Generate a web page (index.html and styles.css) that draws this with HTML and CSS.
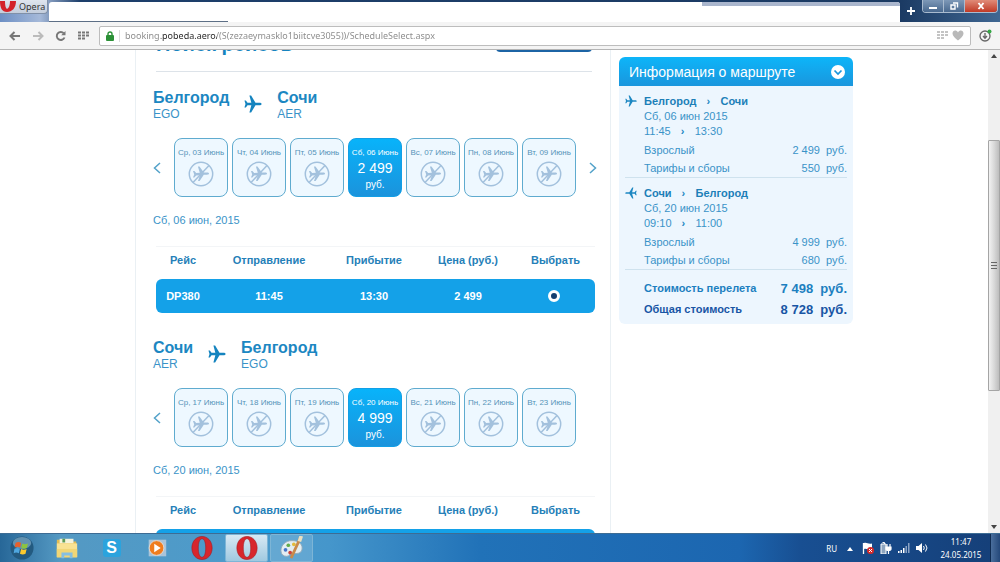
FILE: index.html
```html
<!DOCTYPE html>
<html lang="ru">

<head>
    <meta charset="UTF-8">
    <meta name="viewport" content="width=device-width, initial-scale=1.0">
    <title>Поиск рейсов</title>
    <link rel="stylesheet" href="styles.css">
</head>

<body>
    <!-- Shared icons -->
    <svg class="sprite" aria-hidden="true">
        <symbol id="plane" viewBox="0 0 24 24">
            <path d="M23.5 12c0-1.200-1.500-1.700-3-1.700h-5.200L9.500.8H7.200l2.600 9.500H4.700L2.500 7.400H.6L2 12 .6 16.600h1.900l2.200-2.900h5.100l-2.600 9.500h2.300l5.800-9.500h5.200c1.500 0 3-.5 3-1.700z" />
        </symbol>
        <symbol id="noflight" viewBox="0 0 26 26">
            <circle cx="13" cy="13" r="11.700" fill="none" stroke="currentColor" stroke-width="1.500" />
            <path d="M5 21.500 21 4.500" stroke="currentColor" stroke-width="1.500" />
            <path d="M21 12.600c0-.8-1-1.100-2-1.100h-3.200L11.500 5.500h-1.600l1.900 6.200-3.600.4-1.800-2H5l1.200 3.300L5 16.500h1.400l1.800-2 3.700-.2-1.900 5.800h1.600l4.200-6.300h3.200c1 0 2-.4 2-1.200z" fill="currentColor" />
        </symbol>
        <symbol id="operaLogo" viewBox="0 0 24 26">
            <path fill-rule="evenodd" d="M12 .5C5.500.5 1 6 1 13s4.500 12.500 11 12.500S23 20 23 13 18.500.5 12 .5zM12 3c2.600 0 4 4.300 4 10s-1.400 10-4 10-4-4.300-4-10 1.400-10 4-10z" fill="#d7262c" stroke="#a3161c" stroke-width=".6" />
        </symbol>
        <symbol id="dots" viewBox="0 0 12 9">
            <path d="M0 0h3v2H0zM4 0h3v2H4zM8 0h3v2H8zM0 3h3v2H0zM4 3h3v2H4zM8 3h3v2H8zM0 6h3v2H0zM4 6h3v2H4z" fill="currentColor" />
        </symbol>
    </svg>

    <header class="titlebar">
        <button class="opera-menu"><svg viewBox="0 0 16 12"><path d="M0 0h5c0 4 .5 7 2 8 2-1 3-4 3-8h6c0 7-4 11-9 11S0 7 0 0z" fill="#d3222a" /></svg>Opera</button>
        <div class="tabs">
            <div class="tab"></div>
            <div class="tab-rest"></div>
        </div>
        <button class="new-tab" aria-label="Новая вкладка"><svg viewBox="0 0 8 8"><path d="M4 0v8M0 4h8" stroke="#fff" stroke-width="1.800" /></svg></button>
        <div class="window-buttons">
            <button aria-label="Свернуть"><svg viewBox="0 0 10 8"><path d="M1 5h8v2H1z" fill="#fff" /></svg></button>
            <button aria-label="Развернуть"><svg viewBox="0 0 10 8"><path d="M4 1h4.500v4.500M2 3h4v4H2z" fill="none" stroke="#fff" stroke-width="1.400" /></svg></button>
            <button class="close" aria-label="Закрыть"><svg viewBox="0 0 10 8"><path d="M2.500 1l5 6M7.500 1l-5 6" stroke="#fff" stroke-width="1.900" /></svg></button>
        </div>
    </header>

    <nav class="toolbar">
        <button class="tool" aria-label="Назад"><svg viewBox="0 0 12 10"><path d="M11 5H2M5.500 1 1.500 5l4 4" fill="none" stroke="#777" stroke-width="2" /></svg></button>
        <button class="tool" aria-label="Вперёд"><svg viewBox="0 0 12 10"><path d="M1 5h9M6.500 1l4 4-4 4" fill="none" stroke="#bbb" stroke-width="2" /></svg></button>
        <button class="tool" aria-label="Обновить"><svg viewBox="0 0 12 10"><path d="M9.500 6.500A4 4 0 1 1 8.800 2.300" fill="none" stroke="#777" stroke-width="1.900" /><path d="M10.500 0v4.300H6.200z" fill="#777" /></svg></button>
        <button class="tool dark" aria-label="Экспресс-панель"><svg><use href="#dots" /></svg></button>
        <div class="address">
            <svg class="lock" viewBox="0 0 8 10"><path d="M2 5V3a2 2 0 0 1 4 0v2" fill="none" stroke="#2c9137" stroke-width="1.400" /><rect y="4" width="8" height="6" rx="1" fill="#2c9137" /></svg>
            <input class="url" type="text" aria-label="Адрес" value="booking.pobeda.aero/(S(zezaeymasklo1biitcve3055))/ScheduleSelect.aspx">
            <svg class="address-dots"><use href="#dots" /></svg>
            <svg class="heart" viewBox="0 0 12 11"><path d="M6 10.500C3 8 .5 6 .5 3.500.5 0 4.500-.5 6 2.500 7.500-.5 11.500 0 11.500 3.500 11.500 6 9 8 6 10.500z" fill="#b9b9b9" /></svg>
        </div>
        <button class="download" aria-label="Загрузки"><svg viewBox="0 0 13 13"><circle cx="6" cy="7" r="5" fill="none" stroke="#666" stroke-width="1.300" /><path d="M6 4v5M4 7l2 2.300L8 7" fill="none" stroke="#666" stroke-width="1.300" /><circle cx="10.500" cy="2.500" r="2" fill="#35a845" /></svg></button>
    </nav>

    <div class="viewport">
        <div class="page">
            <main class="schedule">
                <div class="search-head">
                    <h1>Поиск рейсов</h1>
                    <button class="search-button" aria-label="Найти"></button>
                </div>

                <section class="leg">
                    <div class="route">
                        <div><h2>Белгород</h2><p>EGO</p></div>
                        <svg class="route-plane"><use href="#plane" /></svg>
                        <div><h2>Сочи</h2><p>AER</p></div>
                    </div>
                    <div class="days">
                        <button class="arrow" aria-label="Назад"><svg viewBox="0 0 8 12"><path d="M7 1 1.500 6 7 11" /></svg></button>
                        <div class="day-list">
                            <button class="day">Ср, 03 Июнь<svg><use href="#noflight" /></svg></button>
                            <button class="day">Чт, 04 Июнь<svg><use href="#noflight" /></svg></button>
                            <button class="day">Пт, 05 Июнь<svg><use href="#noflight" /></svg></button>
                            <button class="day active">Сб, 06 Июнь<b>2 499</b><span>руб.</span></button>
                            <button class="day">Вс, 07 Июнь<svg><use href="#noflight" /></svg></button>
                            <button class="day">Пн, 08 Июнь<svg><use href="#noflight" /></svg></button>
                            <button class="day">Вт, 09 Июнь<svg><use href="#noflight" /></svg></button>
                        </div>
                        <button class="arrow" aria-label="Вперёд"><svg viewBox="0 0 8 12"><path d="M1 1l5.500 5L1 11" /></svg></button>
                    </div>
                    <p class="date">Сб, 06 июн, 2015</p>
                    <table class="flights">
                        <thead>
                            <tr><th class="c-flight">Рейс</th><th class="c-dep">Отправление</th><th class="c-arr">Прибытие</th><th class="c-price">Цена (руб.)</th><th>Выбрать</th></tr>
                        </thead>
                        <tbody>
                            <tr><td>DP380</td><td>11:45</td><td>13:30</td><td>2 499</td><td><input type="radio" name="out" aria-label="Выбрать DP380" checked></td></tr>
                        </tbody>
                    </table>
                </section>

                <section class="leg">
                    <div class="route">
                        <div><h2>Сочи</h2><p>AER</p></div>
                        <svg class="route-plane"><use href="#plane" /></svg>
                        <div><h2>Белгород</h2><p>EGO</p></div>
                    </div>
                    <div class="days">
                        <button class="arrow" aria-label="Назад"><svg viewBox="0 0 8 12"><path d="M7 1 1.500 6 7 11" /></svg></button>
                        <div class="day-list">
                            <button class="day">Ср, 17 Июнь<svg><use href="#noflight" /></svg></button>
                            <button class="day">Чт, 18 Июнь<svg><use href="#noflight" /></svg></button>
                            <button class="day">Пт, 19 Июнь<svg><use href="#noflight" /></svg></button>
                            <button class="day active">Сб, 20 Июнь<b>4 999</b><span>руб.</span></button>
                            <button class="day">Вс, 21 Июнь<svg><use href="#noflight" /></svg></button>
                            <button class="day">Пн, 22 Июнь<svg><use href="#noflight" /></svg></button>
                            <button class="day">Вт, 23 Июнь<svg><use href="#noflight" /></svg></button>
                        </div>
                    </div>
                    <p class="date">Сб, 20 июн, 2015</p>
                    <table class="flights">
                        <thead>
                            <tr><th class="c-flight">Рейс</th><th class="c-dep">Отправление</th><th class="c-arr">Прибытие</th><th class="c-price">Цена (руб.)</th><th>Выбрать</th></tr>
                        </thead>
                        <tbody>
                            <tr><td></td><td></td><td></td><td></td><td></td></tr>
                        </tbody>
                    </table>
                </section>
            </main>

            <aside class="summary">
                <div class="summary-head">
                    <h2>Информация о маршруте</h2>
                    <button aria-label="Свернуть"><svg viewBox="0 0 14 14"><circle cx="7" cy="7" r="7" fill="#fff" /><path d="M3.500 5.500 7 9l3.500-3.500" fill="none" stroke="#1795dc" stroke-width="1.700" /></svg></button>
                </div>
                <div class="summary-body">
                    <div class="trip">
                        <svg class="trip-plane"><use href="#plane" /></svg>
                        <div>
                            <div class="pair cities"><span>Белгород</span><i>›</i><span>Сочи</span></div>
                            <div>Сб, 06 июн 2015</div>
                            <div class="pair"><span>11:45</span><i>›</i><span>13:30</span></div>
                            <div class="prices">
                                <div class="price"><span>Взрослый</span><span>2 499 &nbsp;руб.</span></div>
                                <div class="price"><span>Тарифы и сборы</span><span>550 &nbsp;руб.</span></div>
                            </div>
                        </div>
                    </div>
                    <div class="trip">
                        <svg class="trip-plane back"><use href="#plane" /></svg>
                        <div>
                            <div class="pair cities"><span>Сочи</span><i>›</i><span>Белгород</span></div>
                            <div>Сб, 20 июн 2015</div>
                            <div class="pair"><span>09:10</span><i>›</i><span>11:00</span></div>
                            <div class="prices">
                                <div class="price"><span>Взрослый</span><span>4 999 &nbsp;руб.</span></div>
                                <div class="price"><span>Тарифы и сборы</span><span>680 &nbsp;руб.</span></div>
                            </div>
                        </div>
                    </div>
                    <div class="totals">
                        <div class="total"><span>Стоимость перелета</span><b>7 498 &nbsp;руб.</b></div>
                        <div class="total grand"><span>Общая стоимость</span><b>8 728 &nbsp;руб.</b></div>
                    </div>
                </div>
            </aside>
        </div>

        <div class="scrollbar">
            <svg viewBox="0 0 12 12"><path d="M6 4l3 4H3z" fill="#444" /></svg>
            <div class="track">
                <div class="thumb"><svg viewBox="0 0 6 7"><path d="M0 .5h6M0 3.500h6M0 6.500h6" stroke="#666" /></svg></div>
            </div>
            <svg viewBox="0 0 12 12"><path d="M6 8 3 4h6z" fill="#444" /></svg>
        </div>
    </div>

    <footer class="taskbar">
        <button class="task" aria-label="Пуск"><svg viewBox="0 0 26 26"><circle cx="13" cy="13" r="12.500" fill="#235a80" /><ellipse cx="13" cy="7.500" rx="10" ry="6.500" fill="#7faac4" opacity=".7" /><path d="M6 7.500c2-1.300 4-1.300 6 0l-1 5c-2-1-4-1-6 0z" fill="#e8602c" /><path d="M13.200 8c2 1.200 4 1.200 6.300 0l-1.300 5c-2 1-4 1-6 0z" fill="#8cc43e" /><path d="M4.800 13.700c2-1 4-1 6 0l-1.200 5c-1.800-1-3.800-1-5.600 0z" fill="#4fa7e0" /><path d="M12 14.200c2 1 4 1 6 0l-1.200 5c-2 1-4 1-6 0z" fill="#fbc92e" /></svg></button>
        <button class="task" aria-label="Проводник"><svg viewBox="0 0 26 26"><path d="M2 4h7l2 2h12v17H2z" fill="#e2bd55" /><path d="M5 3h15v5H5z" fill="#f5f3dc" /><path d="M8 3h3v4H8z" fill="#5d9c56" /><path d="M2 8h22v15H2z" fill="#f8e293" /><path d="M2 14h22v9H2z" fill="#f1d676" /><path d="M7 24v-6h12v6h-3v-3h-6v3z" fill="#85bfe2" /></svg></button>
        <button class="task" aria-label="Skype"><span class="skype">S</span></button>
        <button class="task" aria-label="Проигрыватель"><svg viewBox="0 0 26 26"><rect x="4" y="4" width="19" height="18" fill="#a8c4da" /><circle cx="12.500" cy="13" r="8" fill="#ef7d1f" stroke="#dedede" /><path d="M10 8.500 17 13l-7 4.500z" fill="#fff" /></svg></button>
        <button class="task" aria-label="Opera"><svg><use href="#operaLogo" /></svg></button>
        <button class="task open current" aria-label="Opera"><svg><use href="#operaLogo" /></svg></button>
        <button class="task open" aria-label="Paint"><svg viewBox="0 0 26 26"><path d="M13 5C6 5 1 10 1 16c0 4 3 6 6 6 4 0 3-3 6-3 4 0 11 1 11-6 0-5-5-8-11-8z" fill="#e3edf2" stroke="#91a9b8" /><circle cx="6" cy="15" r="2" fill="#4676c9" /><circle cx="9" cy="10" r="2" fill="#61ad4c" /><circle cx="15" cy="9" r="2" fill="#e2b93c" /><circle cx="11" cy="18" r="2" fill="#cf4439" /><path d="M22 2 12 24" stroke="#c98a4b" stroke-width="3" /><path d="M23 0l-2 6" stroke="#eadfc0" stroke-width="4" /></svg></button>

        <div class="tray">
            <span class="lang">RU</span>
            <svg class="tray-icon" viewBox="0 0 12 12"><path d="M6 5l3 4H3z" fill="#fff" /></svg>
            <svg class="tray-icon" viewBox="0 0 12 12"><path d="M1.500 1v11" stroke="#fff" stroke-width="1.300" /><path d="M2 1c3-1 4 1.500 8 .5v6C6 8.500 5 6 2 7z" fill="#fff" /><circle cx="8.500" cy="8.500" r="3.500" fill="#d52b2b" /><path d="M7 7l3 3M10 7l-3 3" stroke="#fff" /></svg>
            <svg class="tray-icon" viewBox="0 0 12 12"><path d="M1 2h5v10H1zM2.500.5h2V2" fill="#8ea6c0" stroke="#fff" /><path d="M7 2v3M10 2v3M6 5h5v2c0 2-5 2-5 0zM8.500 8v4" fill="#fff" stroke="#fff" stroke-width="1.200" /></svg>
            <svg class="tray-icon" viewBox="0 0 12 12"><path d="M0 9h1.500v2H0zM2.500 8H4v3H2.500zM5 6h1.500v5H5z" fill="#fff" /><path d="M7.500 4H9v7H7.500zM10 1h1.500v10H10z" fill="#8ba3c5" /></svg>
            <svg class="tray-icon" viewBox="0 0 12 12"><path d="M0 4h2.500L6 1v10L2.500 8H0z" fill="#fff" /><path d="M7.500 4q1.500 2 0 4M9.500 2.500q3 3.500 0 7" fill="none" stroke="#fff" /></svg>
            <div class="clock">11:47<br>24.05.2015</div>
            <div class="show-desktop"></div>
        </div>
    </footer>
</body>

</html>
```
FILE: styles.css
```css
* {
    box-sizing: border-box;
}

body {
    margin: 0;
    height: 100vh;
    display: flex;
    flex-direction: column;
    overflow: hidden;
    background: #fff;
    color: #3a93c8;
    font-family: "Liberation Sans", Arial, sans-serif;
    font-size: 11px;
}

h1,
h2,
p {
    margin: 0;
}

button {
    margin: 0;
    padding: 0;
    border: 0;
    background: none;
    color: inherit;
    font-family: inherit;
    cursor: pointer;
}

svg {
    display: block;
    flex: none;
}

.sprite {
    position: absolute;
    width: 0;
    height: 0;
}

/* Browser window */
.titlebar {
    flex: none;
    display: flex;
    align-items: flex-start;
    height: 22px;
    padding-right: 2px;
    background: linear-gradient(to right, #6d8fc4, #a5b9d9 40px, #1d3f6b 80px, #1b3a63 900px, #3f6792);
}

.opera-menu {
    display: flex;
    align-items: center;
    gap: 3px;
    width: 48px;
    height: 14px;
    border: 1px solid #8090a8;
    border-top: 0;
    border-left: 0;
    border-radius: 0 0 4px 0;
    background: linear-gradient(#dfe5ee, #c3cddc);
    color: #333;
    font: 9px "Noto Sans", sans-serif;
}

.opera-menu svg {
    width: 16px;
    height: 12px;
}

.tabs {
    flex: 1;
    display: flex;
    height: 20px;
    margin: 2px 0 0 1px;
    border-radius: 3px 3px 0 0;
    background: #fff;
    overflow: hidden;
}

.tab {
    width: 21%;
    border-bottom: 1px solid #5d6f86;
}

.tab-rest {
    width: 198px;
    height: 4px;
    margin-left: auto;
    background: #aab6cd;
}

.new-tab {
    width: 22px;
    height: 22px;
    display: flex;
    align-items: center;
    justify-content: center;
}

.new-tab svg {
    width: 8px;
    height: 8px;
}

.window-buttons {
    display: flex;
    border: 1px solid #a9bbcf;
    border-top: 0;
    border-radius: 0 0 4px 4px;
    overflow: hidden;
}

.window-buttons button {
    display: flex;
    align-items: center;
    justify-content: center;
    width: 21px;
    height: 12px;
    border-right: 1px solid #a9bbcf;
    background: linear-gradient(#7d98b7, #49698f);
}

.window-buttons .close {
    width: 32px;
    border-right: 0;
    background: linear-gradient(#e08b78, #c03a26);
}

.window-buttons svg {
    width: 10px;
    height: 8px;
}

.toolbar {
    flex: none;
    display: flex;
    align-items: center;
    height: 28px;
    padding: 0 8px 0 3px;
    border-bottom: 1px solid #b5b5b5;
    background: #f4f4f4;
}

.tool {
    display: flex;
    justify-content: center;
    width: 23px;
}

.tool svg {
    width: 12px;
    height: 10px;
}

.tool.dark {
    color: #777;
}

.address {
    flex: 1;
    display: flex;
    align-items: center;
    height: 20px;
    margin: 0 8px 0 4px;
    padding: 0 6px;
    border: 1px solid #bdbdbd;
    border-radius: 2px;
    background: #fff;
}

.lock {
    width: 8px;
    height: 10px;
}

.url {
    flex: 1;
    min-width: 0;
    height: 12px;
    margin-left: 5px;
    padding: 0 0 0 5px;
    border: 0;
    border-left: 1px solid #ddd;
    outline: 0;
    /* the host name is darker than the rest of the address */
    background: linear-gradient(to right, #888 41px, #222 41px, #222 97px, #888 97px);
    background-clip: text;
    color: transparent;
    font: 9px/12px "Noto Sans", sans-serif;
}

.address-dots {
    width: 12px;
    height: 9px;
    margin-right: 3px;
    color: #c4c4c4;
}

.heart {
    width: 12px;
    height: 11px;
}

.download svg {
    width: 13px;
    height: 13px;
}

/* Page */
.viewport {
    flex: 1;
    min-height: 0;
    display: flex;
    overflow: hidden;
}

.page {
    display: flex;
    gap: 8px;
    width: 718px;
    margin: 0 auto;
}

.schedule {
    flex: 1;
    padding-left: 17px;
    border: solid #eaf0f4;
    border-width: 0 1px;
}

/* scrolled partly out of view */
.search-head {
    display: flex;
    justify-content: space-between;
    margin: -18px 18px 16px 3px;
    padding-bottom: 15px;
    border-bottom: 1px solid #dde3e9;
}

.search-head h1 {
    font-size: 20px;
    line-height: 24px;
    color: #1684bf;
}

.search-button {
    width: 96px;
    height: 20px;
    border-radius: 4px;
    background: #1c64a5;
}

.leg {
    margin-bottom: 25px;
}

.route {
    display: flex;
    align-items: center;
    gap: 15px;
    margin-bottom: 18px;
}

.route h2 {
    font-size: 16px;
    line-height: 20px;
    color: #1c87c2;
}

.route p {
    font-size: 12px;
    line-height: 12px;
}

.route-plane {
    width: 18px;
    height: 18px;
    fill: #1584bf;
}

.days {
    display: flex;
    align-items: center;
    gap: 13px;
}

.day-list {
    display: flex;
    gap: 4px;
}

.arrow svg {
    width: 8px;
    height: 12px;
    fill: none;
    stroke: #53a2c9;
    stroke-width: 1.5px;
}

.day {
    display: flex;
    flex-direction: column;
    align-items: center;
    width: 54px;
    height: 59px;
    padding-top: 9px;
    border: 1px solid #5fabcf;
    border-radius: 8px;
    background: #eef8ff;
    color: #5593b8;
    font-size: 8px;
    line-height: 10px;
    white-space: nowrap;
}

.day svg {
    width: 26px;
    height: 26px;
    margin-top: 3px;
    color: #a3c1dd;
}

.day.active {
    border-color: #129fe6;
    background: linear-gradient(#08b3fa, #1b93dc);
    color: #fff;
}

.day b {
    margin-top: 2px;
    font-size: 14px;
    font-weight: normal;
    line-height: 17px;
}

.day span {
    font-size: 10px;
    line-height: 15px;
}

.date {
    margin: 15px 0 18px;
    line-height: 16px;
}

.flights {
    width: 439px;
    margin-left: 3px;
    border-collapse: separate;
    border-spacing: 0;
    table-layout: fixed;
    text-align: center;
}

.flights th {
    height: 33px;
    padding: 0 0 6px;
    border-top: 1px solid #f3f5f7;
    color: #2580b8;
}

.c-flight {
    width: 54px;
}

.c-dep {
    width: 118px;
}

.c-arr {
    width: 92px;
}

.c-price {
    width: 96px;
}

.flights td {
    height: 34px;
    padding: 0;
    background: #14a1e8;
    color: #fff;
    font-weight: bold;
}

.flights td:first-child {
    border-radius: 6px 0 0 6px;
}

.flights td:last-child {
    padding-right: 4px;
    border-radius: 0 6px 6px 0;
}

.flights input {
    appearance: none;
    display: block;
    width: 12px;
    height: 12px;
    margin: 0 auto;
    border: 3px solid #fff;
    border-radius: 50%;
    background: #14a1e8;
}

.flights input:checked {
    background: #153f70;
}

/* Route summary */
.summary {
    flex: none;
    width: 234px;
    padding-top: 7px;
}

.summary-head {
    display: flex;
    align-items: center;
    justify-content: space-between;
    height: 29px;
    padding: 0 8px 0 10px;
    border-radius: 6px 6px 0 0;
    background: linear-gradient(#0db5f9, #1a96dd);
    color: #fff;
}

.summary-head h2 {
    font-size: 14px;
    font-weight: normal;
}

.summary-head svg {
    width: 14px;
    height: 14px;
}

.summary-body {
    padding: 0 6px 4px;
    border-radius: 0 0 6px 6px;
    background: #edf6fe;
    line-height: 15px;
}

.trip {
    display: grid;
    grid-template-columns: 19px 1fr;
    padding-top: 8px;
    border-bottom: 1px solid #cfe2ee;
}

.trip-plane {
    width: 12px;
    height: 12px;
    margin-top: 1px;
    fill: #1c87c2;
}

.trip-plane.back {
    transform: scaleX(-1);
}

.pair {
    display: flex;
    gap: 10px;
}

.pair i {
    width: 4px;
    font-style: normal;
    font-weight: bold;
    color: #1c87c2;
}

.cities {
    font-weight: bold;
    color: #1c7fb8;
}

.prices {
    margin-top: 2px;
}

.price {
    display: flex;
    justify-content: space-between;
    line-height: 18px;
}

.totals {
    padding: 8px 0 0 19px;
}

.total {
    display: flex;
    justify-content: space-between;
    line-height: 21px;
    font-weight: bold;
    color: #1c7fc0;
}

.total b {
    font-size: 13px;
}

.total.grand {
    color: #1855a5;
}

.scrollbar {
    flex: none;
    display: flex;
    flex-direction: column;
    width: 12px;
    background: #f0f0f0;
}

.scrollbar > svg {
    width: 12px;
    height: 12px;
}

.track {
    flex: 1;
    padding-top: 78px;
}

.thumb {
    display: flex;
    align-items: center;
    justify-content: center;
    height: 66%;
    border: 1px solid #a5a5a5;
    border-radius: 1px;
    background: linear-gradient(to right, #f2f2f2, #d9d9d9 50%, #bdbdbd);
}

.thumb svg {
    width: 6px;
    height: 7px;
}

/* Taskbar */
.taskbar {
    flex: none;
    display: flex;
    gap: 2px;
    height: 29px;
    border-top: 1px solid #3d6c94;
    background: linear-gradient(to right, #276798, #5499c3 60px, #4c9bcb 240px, #4596cb 330px, #2172b8 480px, #1c66b0 740px, #184f92 800px, #153f78);
}

.task {
    display: flex;
    align-items: center;
    justify-content: center;
    width: 43px;
}

.task svg {
    width: 24px;
    height: 24px;
}

.task.open {
    border: 1px solid #7db5d6;
    border-radius: 2px;
    background: rgba(255, 255, 255, 0.15);
}

.task.current {
    background: linear-gradient(#d8e9f4, #a0c9e0);
}

.skype {
    width: 18px;
    border-radius: 3px;
    background: #2ba3dd;
    color: #fff;
    font-size: 16px;
    font-weight: bold;
    line-height: 18px;
}

.tray {
    display: flex;
    align-items: center;
    gap: 6px;
    margin-left: auto;
    color: #fff;
    font: 8px/13px "Noto Sans", sans-serif;
}

.lang {
    margin-right: 1px;
}

.tray-icon {
    width: 12px;
    height: 12px;
}

.clock {
    width: 46px;
    margin-left: 4px;
    text-align: center;
}

.show-desktop {
    width: 10px;
    height: 100%;
    border-left: 1px solid #0e2b52;
    background: linear-gradient(to right, #4a6e9c, #24487a);
}
```
